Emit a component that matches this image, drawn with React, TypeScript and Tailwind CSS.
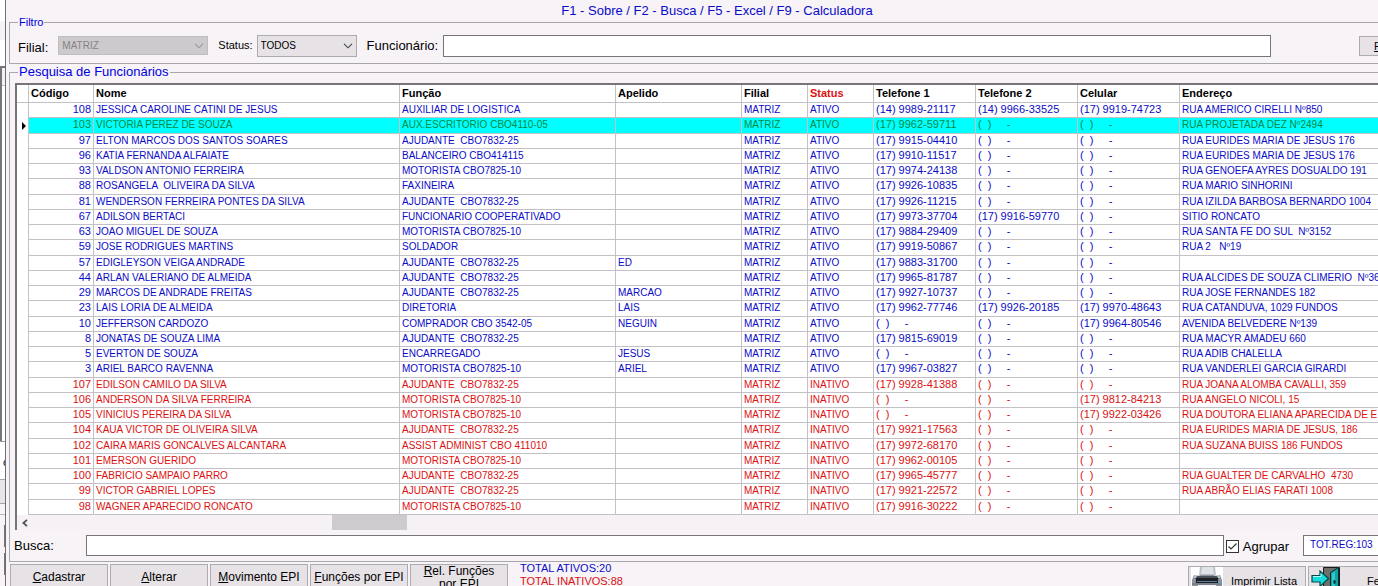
import React from "react";

type Row = [string, string, string, string, string, string, string, string];

const NONE = "(  )     -";

/* codigo, nome, funcao, apelido, telefone 1, telefone 2, celular, endereco */
const ativos: Row[] = [
  ["108", "JESSICA CAROLINE CATINI DE JESUS", "AUXILIAR DE LOGISTICA", "", "(14) 9989-21117", "(14) 9966-33525", "(17) 9919-74723", "RUA AMERICO CIRELLI Nº850"],
  ["103", "VICTORIA PEREZ DE SOUZA", "AUX.ESCRITORIO CBO4110-05", "", "(17) 9962-59711", NONE, NONE, "RUA PROJETADA DEZ Nº2494"],
  ["97", "ELTON MARCOS DOS SANTOS SOARES", "AJUDANTE  CBO7832-25", "", "(17) 9915-04410", NONE, NONE, "RUA EURIDES MARIA DE JESUS 176"],
  ["96", "KATIA FERNANDA ALFAIATE", "BALANCEIRO CBO414115", "", "(17) 9910-11517", NONE, NONE, "RUA EURIDES MARIA DE JESUS 176"],
  ["93", "VALDSON ANTONIO FERREIRA", "MOTORISTA CBO7825-10", "", "(17) 9974-24138", NONE, NONE, "RUA GENOEFA AYRES DOSUALDO 191"],
  ["88", "ROSANGELA  OLIVEIRA DA SILVA", "FAXINEIRA", "", "(17) 9926-10835", NONE, NONE, "RUA MARIO SINHORINI"],
  ["81", "WENDERSON FERREIRA PONTES DA SILVA", "AJUDANTE  CBO7832-25", "", "(17) 9926-11215", NONE, NONE, "RUA IZILDA BARBOSA BERNARDO 1004"],
  ["67", "ADILSON BERTACI", "FUNCIONARIO COOPERATIVADO", "", "(17) 9973-37704", "(17) 9916-59770", NONE, "SITIO RONCATO"],
  ["63", "JOAO MIGUEL DE SOUZA", "MOTORISTA CBO7825-10", "", "(17) 9884-29409", NONE, NONE, "RUA SANTA FE DO SUL  Nº3152"],
  ["59", "JOSE RODRIGUES MARTINS", "SOLDADOR", "", "(17) 9919-50867", NONE, NONE, "RUA 2   Nº19"],
  ["57", "EDIGLEYSON VEIGA ANDRADE", "AJUDANTE  CBO7832-25", "ED", "(17) 9883-31700", NONE, NONE, ""],
  ["44", "ARLAN VALERIANO DE ALMEIDA", "AJUDANTE  CBO7832-25", "", "(17) 9965-81787", NONE, NONE, "RUA ALCIDES DE SOUZA CLIMERIO  Nº36"],
  ["29", "MARCOS DE ANDRADE FREITAS", "AJUDANTE  CBO7832-25", "MARCAO", "(17) 9927-10737", NONE, NONE, "RUA JOSE FERNANDES 182"],
  ["23", "LAIS LORIA DE ALMEIDA", "DIRETORIA", "LAIS", "(17) 9962-77746", "(17) 9926-20185", "(17) 9970-48643", "RUA CATANDUVA, 1029 FUNDOS"],
  ["10", "JEFFERSON CARDOZO", "COMPRADOR CBO 3542-05", "NEGUIN", NONE, NONE, "(17) 9964-80546", "AVENIDA BELVEDERE Nº139"],
  ["8", "JONATAS DE SOUZA LIMA", "AJUDANTE  CBO7832-25", "", "(17) 9815-69019", NONE, NONE, "RUA MACYR AMADEU 660"],
  ["5", "EVERTON DE SOUZA", "ENCARREGADO", "JESUS", NONE, NONE, NONE, "RUA ADIB CHALELLA"],
  ["3", "ARIEL BARCO RAVENNA", "MOTORISTA CBO7825-10", "ARIEL", "(17) 9967-03827", NONE, NONE, "RUA VANDERLEI GARCIA GIRARDI"],
];

const inativos: Row[] = [
  ["107", "EDILSON CAMILO DA SILVA", "AJUDANTE  CBO7832-25", "", "(17) 9928-41388", NONE, NONE, "RUA JOANA ALOMBA CAVALLI, 359"],
  ["106", "ANDERSON DA SILVA FERREIRA", "MOTORISTA CBO7825-10", "", NONE, NONE, "(17) 9812-84213", "RUA ANGELO NICOLI, 15"],
  ["105", "VINICIUS PEREIRA DA SILVA", "MOTORISTA CBO7825-10", "", NONE, NONE, "(17) 9922-03426", "RUA DOUTORA ELIANA APARECIDA DE E"],
  ["104", "KAUA VICTOR DE OLIVEIRA SILVA", "AJUDANTE  CBO7832-25", "", "(17) 9921-17563", NONE, NONE, "RUA EURIDES MARIA DE JESUS, 186"],
  ["102", "CAIRA MARIS GONCALVES ALCANTARA", "ASSIST ADMINIST CBO 411010", "", "(17) 9972-68170", NONE, NONE, "RUA SUZANA BUISS 186 FUNDOS"],
  ["101", "EMERSON GUERIDO", "MOTORISTA CBO7825-10", "", "(17) 9962-00105", NONE, NONE, ""],
  ["100", "FABRICIO SAMPAIO PARRO", "AJUDANTE  CBO7832-25", "", "(17) 9965-45777", NONE, NONE, "RUA GUALTER DE CARVALHO  4730"],
  ["99", "VICTOR GABRIEL LOPES", "AJUDANTE  CBO7832-25", "", "(17) 9921-22572", NONE, NONE, "RUA ABRÃO ELIAS FARATI 1008"],
  ["98", "WAGNER APARECIDO RONCATO", "MOTORISTA CBO7825-10", "", "(17) 9916-30222", NONE, NONE, ""],
];

const rows = [
  ...ativos.map((r) => ({ r, status: "ATIVO" })),
  ...inativos.map((r) => ({ r, status: "INATIVO" })),
];

const SELECTED = "103";

function Chevron({ className }: { className: string }) {
  return (
    <svg viewBox="0 0 10 6" className={`pointer-events-none absolute right-1 top-1/2 h-1.5 w-2.5 -translate-y-1/2 ${className}`} fill="none" stroke="currentColor" strokeWidth="1.1">
      <path d="M1 0.8 5 4.8 9 0.8" />
    </svg>
  );
}

function PrinterIcon() {
  return (
    <svg viewBox="0 0 32 32" className="h-8 w-8 shrink-0 bg-white">
      <path d="M9 0h15l1 9H8z" fill="#b9bfc8" />
      <path d="M11 0h11l1 7H10z" fill="#dfe3e8" />
      <path d="M3 8h26l2 5v10H1V13z" fill="#8d939d" />
      <path d="M4 8h5v3H3zM23 8h5l1 3h-6z" fill="#c9ced6" />
      <path d="M6 9h20l2 3H4z" fill="#4a515b" />
      <path d="M5 11h22v6H5z" fill="#1b2028" />
      <path d="M6 14h20v1H6z" fill="#5f7890" />
      <path d="M1 16h30v2H1z" fill="#7b818b" />
      <path d="M7 18h18l2 8H5z" fill="#f2f4f6" />
      <circle cx="29" cy="16" r="1" fill="#37b6c8" />
    </svg>
  );
}

function DoorIcon() {
  return (
    <svg viewBox="0 0 30 32" className="h-8 w-[30px] shrink-0">
      <path d="M12.5 0.5h16v28h-16z" fill="#6e6e6e" stroke="#1a1a1a" />
      <path d="M19.5 5.5 27.5 0.5v27l-8 4z" fill="#0fa3a3" stroke="#003030" />
      <path d="M21 6.5 24 4.5v24l-3 1.5z" fill="#35c6c6" />
      <ellipse cx="23.5" cy="15" rx="1.2" ry="2" fill="#003030" />
      <path d="M1 8.5h8V4l8.5 7.5-8.5 8V15H1z" fill="#18dcdc" stroke="#004848" strokeWidth="1.2" />
      <path d="M2 9.5h8V6.5" fill="none" stroke="#b8ffff" strokeWidth="0.9" />
    </svg>
  );
}

function BackWindow() {
  return (
    <div className="flex w-[5px] shrink-0 flex-col overflow-hidden bg-white" aria-hidden="true">
      <div className="h-[21px]" />
      <div className="h-[19px] bg-[#f5f3f5]" />
      <div className="h-[26px]" />
      <div className="flex h-[375px] flex-col border-l-2 border-t-2 border-[#77757a]">
        <div className="h-[18px] border-b border-[#c4c2c6] bg-[#f3f0f3]" />
      </div>
      <div className="h-[38px] border-t border-[#9a989c] pt-3 text-[11px] leading-4">
        <span className="block pl-[3px] text-[#00003c]">c</span>
      </div>
      <div className="h-[25px] border-y border-[#a5a3a7] bg-[#e8e4e8]" />
      <div className="h-[10px] bg-[#f7f3f7]" />
      <div className="flex flex-1 flex-col items-end gap-1.5 border-t border-[#bab8bc] bg-[#f7f3f7] pt-2.5">
        <div className="h-[22px] w-px bg-[#77757a]" />
        <div className="h-[22px] w-px bg-[#77757a]" />
      </div>
    </div>
  );
}

const cell = "overflow-hidden border-b border-r border-[#c3c1c5] pb-px pl-0.5 text-left";
const number = `${cell} text-[11px]`;

function EmployeeGrid() {
  return (
    <div className="ml-[5px] mt-[3px] border-l-2 border-t-2 border-[#77757a] bg-white">
      <table className="h-[430px] w-full table-fixed border-separate border-spacing-0 whitespace-pre text-[10px] leading-[13px]">
        <colgroup>
          <col className="w-[12px]" />
          <col className="w-[65px]" />
          <col className="w-[306px]" />
          <col className="w-[216px]" />
          <col className="w-[126px]" />
          <col className="w-[66px]" />
          <col className="w-[66px]" />
          <col className="w-[102px]" />
          <col className="w-[102px]" />
          <col className="w-[102px]" />
          <col />
        </colgroup>
        <thead>
          <tr className="h-[18px] text-[11px] text-black">
            <th className={cell} />
            <th className={cell}>Código</th>
            <th className={cell}>Nome</th>
            <th className={cell}>Função</th>
            <th className={cell}>Apelido</th>
            <th className={cell}>Filial</th>
            <th className={`${cell} text-[#e01010]`}>Status</th>
            <th className={cell}>Telefone 1</th>
            <th className={cell}>Telefone 2</th>
            <th className={cell}>Celular</th>
            <th className={cell}>Endereço</th>
          </tr>
        </thead>
        <tbody>
          {rows.map(({ r, status }) => {
            const selected = r[0] === SELECTED;
            const tone = selected
              ? "bg-[#00ffff] text-[#008a45]"
              : status === "ATIVO"
                ? "text-[#0a0ac8]"
                : "text-[#dc1010]";
            return (
              <tr key={r[0]} className={tone}>
                <td className="border-r border-[#c3c1c5] bg-white">
                  {selected && (
                    <svg viewBox="0 0 4 8" className="ml-[5px] h-2 w-1">
                      <path d="M0 0 4 4 0 8z" fill="#000" />
                    </svg>
                  )}
                </td>
                <td className="border-b border-r border-[#c3c1c5] pb-px pr-0.5 text-right text-[11px]">{r[0]}</td>
                <td className={cell}>{r[1]}</td>
                <td className={cell}>{r[2]}</td>
                <td className={cell}>{r[3]}</td>
                <td className={cell}>MATRIZ</td>
                <td className={cell}>{status}</td>
                <td className={number}>{r[4]}</td>
                <td className={number}>{r[5]}</td>
                <td className={number}>{r[6]}</td>
                <td className={cell}>{r[7]}</td>
              </tr>
            );
          })}
        </tbody>
      </table>
      <div className="flex h-[15px] bg-[#f5f1f5]">
        <button type="button" aria-label="Rolar para a esquerda" className="flex w-4 items-center justify-center text-[#55535a]">
          <svg viewBox="0 0 6 8" className="h-2 w-1.5" fill="none" stroke="currentColor" strokeWidth="1.8">
            <path d="M5 0.8 1.4 4 5 7.2" />
          </svg>
        </button>
        <div className="ml-[299px] w-[75px] bg-[#cdcbcd]" />
      </div>
    </div>
  );
}

const actionButton =
  "mt-0.5 h-7 w-[98px] shrink-0 border border-[#adabad] bg-[#e6e2e6] pb-px text-center text-[12px] leading-[13px] text-black";

export default function App() {
  return (
    <div className="flex h-screen overflow-hidden bg-[#f7f3f7] font-['Liberation_Sans',Arial,sans-serif] text-black">
      <BackWindow />
      <main className="-mr-[50px] flex min-w-0 flex-1 flex-col border-l border-[#6f6d72]">
        <h1 className="h-4 pt-1 text-center text-[13px] leading-[14px] text-[#0a0ac8]">
          F1 - Sobre / F2 - Busca / F5 - Excel / F9 - Calculadora
        </h1>

        <fieldset className="ml-[3px] border border-[#a9a7ab]">
          <legend className="ml-2 px-px text-[11px] leading-3 text-[#0000e0]">Filtro</legend>
          <div className="flex h-[35px] items-center pl-2">
            <label htmlFor="filial" className="mr-2.5 pt-1 text-[13px]">Filial:</label>
            <div className="relative mr-2.5 h-[19px] w-[150px]">
              <select id="filial" disabled className="block h-full w-full appearance-none border border-[#bfbdbf] bg-[#cccacc] pl-[3px] pt-px text-[10px] leading-4 text-[#858385] opacity-100">
                <option>MATRIZ</option>
              </select>
              <Chevron className="text-[#9a989a]" />
            </div>
            <label htmlFor="status" className="mr-1 text-[11px]">Status:</label>
            <div className="relative mr-2.5 h-[22px] w-[100px]">
              <select id="status" className="block h-full w-full appearance-none border border-[#adabad] bg-[#e6e2e6] pl-[3px] pt-px text-[10px] leading-4 text-black">
                <option>TODOS</option>
              </select>
              <Chevron className="text-[#444]" />
            </div>
            <label htmlFor="funcionario" className="mr-[5px] text-[13px]">Funcionário:</label>
            <input id="funcionario" className="h-[22px] min-w-0 flex-1 border border-[#77757a] bg-white px-1 text-[13px]" />
            <button type="button" className="ml-[88px] h-5 w-[68px] border border-[#adabad] bg-[#e6e2e6] pl-3.5 text-left text-[11px] leading-4">
              <u>F</u>
            </button>
          </div>
        </fieldset>

        <fieldset className="ml-[3px] border border-[#a9a7ab]">
          <legend className="ml-2 px-px text-[13px] leading-4 text-[#0000e0]">Pesquisa de Funcionários</legend>
          <EmployeeGrid />
          <div className="flex h-[31px] items-center pl-1">
            <label htmlFor="busca" className="w-[72px] shrink-0 text-[13px]">Busca:</label>
            <input id="busca" className="h-[21px] min-w-0 flex-1 border border-[#77757a] bg-white px-1 text-[13px]" />
            <label className="ml-0.5 flex items-center gap-1 pt-0.5 text-[13px]">
              <span className="relative block h-[13px] w-[13px]">
                <input type="checkbox" defaultChecked className="peer block h-full w-full appearance-none border border-[#333] bg-white" />
                <svg viewBox="0 0 13 13" className="pointer-events-none absolute inset-0 hidden h-full w-full peer-checked:block" fill="none" stroke="#333" strokeWidth="1.2">
                  <path d="M2.5 6.5 5 9 10.5 3.5" />
                </svg>
              </span>
              Agrupar
            </label>
            <div className="ml-3.5 h-[21px] w-[124px] border border-[#77757a] bg-white pl-1.5 text-[10px] leading-[18px] text-[#0a0ac8]">TOT.REG:103</div>
          </div>
        </fieldset>

        <div className="ml-1 flex items-start gap-0.5">
          <button type="button" className={actionButton}><u>C</u>adastrar</button>
          <button type="button" className={actionButton}><u>A</u>lterar</button>
          <button type="button" className={actionButton}><u>M</u>ovimento EPI</button>
          <button type="button" className={actionButton}><u>F</u>unções por EPI</button>
          <button type="button" className={`${actionButton} px-2`}><u>R</u>el. Funções por EPI</button>
          <div className="ml-2.5 flex-1 text-[11px] leading-[13px]">
            <p className="text-[#0a0ac8]">TOTAL ATIVOS:20</p>
            <p className="text-[#dc1010]">TOTAL INATIVOS:88</p>
          </div>
          <button type="button" className="mt-1 flex h-[34px] w-[118px] items-center gap-2 border border-[#adabad] bg-[#e6e2e6] pl-0.5 text-[11px] leading-4">
            <PrinterIcon />
            <span className="whitespace-nowrap pb-1">Imprimir Lista</span>
          </button>
          <button type="button" className="mt-1 flex h-[34px] w-[120px] items-center gap-[26px] border border-[#adabad] bg-[#e6e2e6] pl-0.5 text-[11px] leading-4">
            <DoorIcon />
            <span className="pb-1">Fe</span>
          </button>
        </div>
      </main>
    </div>
  );
}
